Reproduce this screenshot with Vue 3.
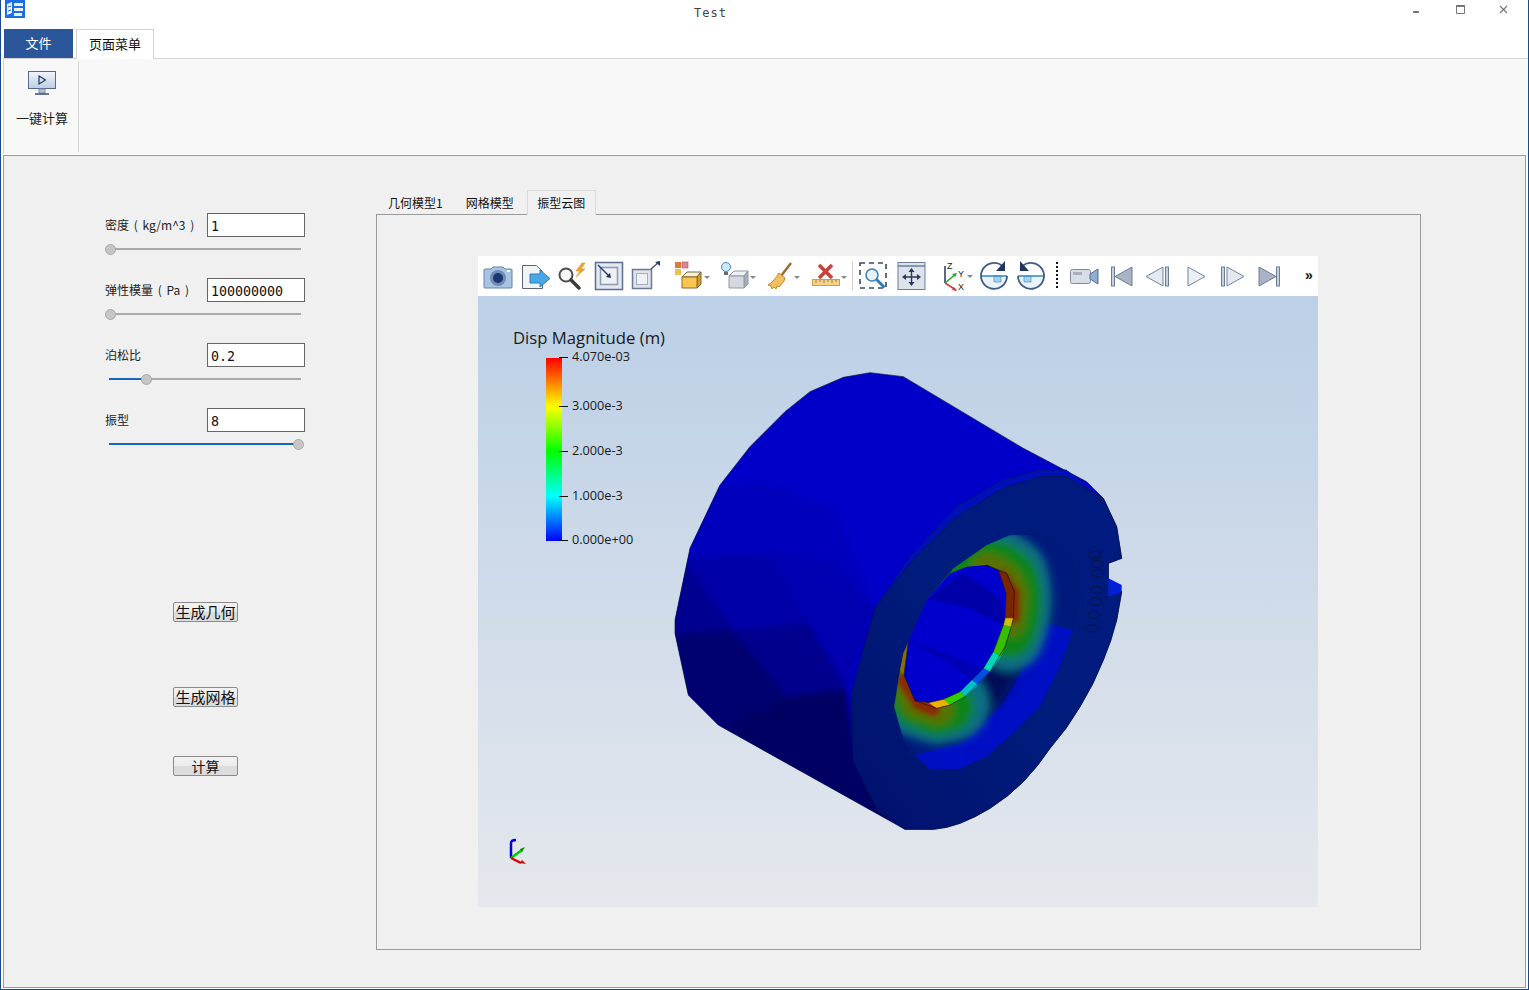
<template>
  <div class="window">
    <header class="title-bar">
      <svg class="app-icon" width="20" height="18" viewBox="0 0 20 18">
        <rect width="20" height="18" fill="#1b6fe3" />
        <path d="M2 4l5-2v11l-5 2zM9 3h9v3H9zM9 8h9v3H9zM9 13h8v3H9z" fill="#e8f1fc" />
        <path d="M3 7l3-1M3 11l3-1" stroke="#1b6fe3" />
      </svg>
      <span class="title-text">Test</span>
      <div class="win-controls">
        <svg width="42" height="24" viewBox="0 0 42 24"><rect x="16" y="11" width="6" height="2" fill="#777" /></svg>
        <svg width="42" height="24" viewBox="0 0 42 24"><path d="M17.500 5.500h8v8h-8z" fill="none" stroke="#777" /><path d="M17 6h9" stroke="#777" stroke-width="2" /></svg>
        <svg width="42" height="24" viewBox="0 0 42 24"><path d="M19 6l7 7M26 6l-7 7" stroke="#777" stroke-width="1.200" /></svg>
      </div>
    </header>

    <nav class="ribbon-tabs">
      <div class="file-tab">文件</div>
      <div class="page-tab">页面菜单</div>
    </nav>

    <section class="ribbon">
      <div class="ribbon-group">
        <svg width="28" height="24" viewBox="0 0 28 24">
          <defs>
            <linearGradient id="screen" x1="0" y1="0" x2="0" y2="1">
              <stop offset="0" stop-color="#f2f6fb" />
              <stop offset="1" stop-color="#bccde4" />
            </linearGradient>
          </defs>
          <rect x="0.500" y="0.500" width="27" height="17" fill="url(#screen)" stroke="#56698c" />
          <path d="M11 5l6.500 4-6.500 4z" fill="none" stroke="#24365e" stroke-width="1.200" />
          <path d="M11 18h6v4h-6z" fill="#b9c3d4" stroke="#7a8aa6" />
          <path d="M7 23h14" stroke="#3a4a6e" stroke-width="1.500" />
        </svg>
        <span class="ribbon-label">一键计算</span>
      </div>
    </section>

    <main class="central">
      <aside class="side-panel">
        <div class="form">
          <div v-for="field in fields" :key="field.label" class="field">
            <div class="field-row">
              <label class="field-label">{{ field.label }}</label>
              <input class="field-input" type="text" :value="field.value" readonly />
            </div>
            <div class="slider">
              <div class="slider-fill" :style="{ width: field.pos + 'px' }"></div>
              <div class="slider-thumb" :style="{ left: field.pos + 'px' }"></div>
            </div>
          </div>
        </div>
        <div class="actions">
          <button class="action-btn geom">生成几何</button>
          <button class="action-btn mesh">生成网格</button>
          <button class="action-btn calc">计算</button>
        </div>
      </aside>

      <section class="tab-widget">
        <div class="tab-bar">
          <div v-for="tab in tabs" :key="tab" class="tab" :class="{ active: tab === '振型云图' }">{{ tab }}</div>
        </div>
        <div class="tab-pane">
          <div class="viewer">
            <div class="toolbar">
              <!-- camera -->
              <svg width="38" height="32" viewBox="0 0 38 32">
                <path d="M3 9h6l2-2h10l2 2h6a1 1 0 0 1 1 1v17a1 1 0 0 1-1 1H3a1 1 0 0 1-1-1V10a1 1 0 0 1 1-1z" fill="#a9c4e2" stroke="#6584ab" />
                <circle cx="16" cy="18" r="8" fill="#6d8db5" />
                <circle cx="16" cy="18" r="5" fill="#1b3672" />
                <path d="M25 11h3" stroke="#fff" stroke-width="2" />
              </svg>
              <!-- export -->
              <svg width="36" height="32" viewBox="0 0 36 32">
                <path d="M2.500 5.500h14l6 6v17h-20z" fill="#f1f3f6" stroke="#5b6675" />
                <path d="M10 14h10v-4l10 8.500-10 8.500v-4H10z" fill="#4aa6e4" stroke="#2a80c4" />
              </svg>
              <!-- zoom to data -->
              <svg width="37" height="32" viewBox="0 0 37 32">
                <circle cx="10" cy="15" r="6.500" fill="#f3f5f7" stroke="#4d4d4d" stroke-width="2" />
                <path d="M15 20l8 8" stroke="#3c3c3c" stroke-width="3.500" stroke-linecap="round" />
                <path d="M26 3l-6 8h4l-4 6 9-8h-4l4-6z" fill="#f0a42c" stroke="#d68a18" stroke-width="0.500" />
              </svg>
              <!-- reset -->
              <svg width="37" height="32" viewBox="0 0 37 32">
                <rect x="2.500" y="2.500" width="27" height="27" fill="#e3e7ee" stroke="#5a6f92" stroke-width="1.500" />
                <rect x="7.500" y="7.500" width="17" height="17" fill="#eef0f4" stroke="#8d9bb2" stroke-width="1.500" />
                <path d="M5 5l11 11" stroke="#2a3f68" stroke-width="1.400" />
                <path d="M18 18l-5-1 4-4z" fill="#1a2f5c" />
              </svg>
              <!-- zoom closest -->
              <svg width="44" height="32" viewBox="0 0 44 32">
                <rect x="2.500" y="9.500" width="19" height="19" fill="#dfe3ea" stroke="#6c7a91" stroke-width="1.500" />
                <rect x="6.500" y="13.500" width="11" height="11" fill="#eff1f4" stroke="#a2adbe" />
                <path d="M21 9l8-7" stroke="#3f4e6c" stroke-width="1.400" />
                <path d="M30 1v5l-5-4z" fill="#2b3f66" />
              </svg>
              <!-- select cells -->
              <svg width="47" height="32" viewBox="0 0 47 32">
                <rect x="1" y="2" width="6" height="6" fill="#e07a3a" />
                <rect x="8" y="2" width="6" height="6" fill="#d88a9a" stroke="#b33" stroke-width="0.500" />
                <rect x="1" y="9" width="6" height="6" fill="#f0c04c" />
                <path d="M8 17l5-5h14l-4 5z" fill="#f5efdc" stroke="#7a6a40" />
                <path d="M23 17l4-5v12l-4 4z" fill="#d89a2a" stroke="#7a6a40" />
                <path d="M8 17h15v11H8z" fill="#fbc552" stroke="#8a6a20" />
                <path d="M30 16h6l-3 3z" fill="#888" />
              </svg>
              <!-- light cube -->
              <svg width="44" height="32" viewBox="0 0 44 32">
                <circle cx="5" cy="7" r="4.500" fill="#cfe8fa" stroke="#3e88c6" />
                <path d="M3 12h4v3H3z" fill="#667" />
                <path d="M8 16l5-5h14l-4 5z" fill="#eef0f3" stroke="#8f98a6" />
                <path d="M23 16l4-5v13l-4 4z" fill="#a7aeb9" stroke="#8f98a6" />
                <path d="M8 16h15v12H8z" fill="#d5d9df" stroke="#8f98a6" />
                <path d="M29 16h6l-3 3z" fill="#888" />
              </svg>
              <!-- broom -->
              <svg width="45" height="32" viewBox="0 0 45 32">
                <path d="M26 3L16 16" stroke="#9a6a30" stroke-width="2.400" />
                <path d="M14 13l6 5-1 3-5 6-2-1-1 3-2-2-2 2-1-3-3-1c4-2 8-7 11-12z" fill="#f2c060" stroke="#c98a28" />
                <path d="M29 16h6l-3 3z" fill="#888" />
              </svg>
              <!-- delete ruler -->
              <svg width="47" height="32" viewBox="0 0 47 32">
                <path d="M9 5l13 13M22 5L9 18" stroke="#c9403a" stroke-width="3.600" />
                <rect x="2.500" y="19.500" width="27" height="6" fill="#f4d48a" stroke="#d89a40" />
                <path d="M6 20v3M10 20v2M14 20v3M18 20v2M22 20v3M26 20v2" stroke="#a87828" />
                <path d="M31 16h6l-3 3z" fill="#888" />
                <path d="M42.500 2v28" stroke="#d0d0d0" />
              </svg>
              <!-- zoom to box -->
              <svg width="38" height="32" viewBox="0 0 38 32">
                <rect x="3" y="3" width="26" height="25" fill="none" stroke="#3a4a6e" stroke-width="1.600" stroke-dasharray="5 4" />
                <circle cx="15" cy="15" r="6" fill="#e6f1fa" stroke="#3d7fb8" stroke-width="1.600" />
                <path d="M19.500 19.500l8 8" stroke="#2f7cbc" stroke-width="3" />
              </svg>
              <!-- pan -->
              <svg width="44" height="32" viewBox="0 0 44 32">
                <rect x="3" y="2.500" width="27" height="27" fill="#dde2eb" stroke="#6c7d99" />
                <path d="M3 6h27" stroke="#6c7d99" stroke-width="1.500" />
                <path d="M16.500 11v12M10 17h13" stroke="#27395e" stroke-width="1.400" />
                <path d="M16.500 8l-3 4h6zM16.500 26l-3-4h6zM7 17l4-3v6zM26 17l-4-3v6z" fill="#27395e" />
              </svg>
              <!-- axes -->
              <svg width="39" height="32" viewBox="0 0 39 32">
                <path d="M6 23V6" stroke="#24365e" stroke-width="1.500" />
                <path d="M6 23l11-9" stroke="#2ca02c" stroke-width="1.500" />
                <path d="M6 23l11 7" stroke="#d8393a" stroke-width="1.500" />
                <path d="M18 13l-5 1 3 3z" fill="#2ca02c" />
                <path d="M18 31l-5-1 2-3z" fill="#d8393a" />
                <text x="8" y="9" class="axis-letter">Z</text>
                <text x="19" y="17" class="axis-letter">Y</text>
                <text x="19" y="30" class="axis-letter">X</text>
                <path d="M28 15h6l-3 3z" fill="#888" />
              </svg>
              <!-- rotate cw -->
              <svg width="37" height="32" viewBox="0 0 37 32">
                <path d="M3 16a13 13 0 0 0 26 0z" fill="#eaf4fb" />
                <path d="M16 16h7v6h-7z" fill="#a8d4f0" stroke="#4d8cc0" stroke-width="0.700" />
                <path d="M3 16h26" stroke="#2f86c8" stroke-width="1.500" />
                <path d="M25 6.500A13 13 0 1 0 29 16" fill="none" stroke="#3f5c82" stroke-width="1.800" />
                <path d="M27 1v10H18z" fill="#1f3660" />
              </svg>
              <!-- rotate ccw -->
              <svg width="53" height="32" viewBox="0 0 53 32">
                <g transform="translate(32 0) scale(-1 1)">
                  <path d="M3 16a13 13 0 0 0 26 0z" fill="#eaf4fb" />
                  <path d="M16 16h7v6h-7z" fill="#a8d4f0" stroke="#4d8cc0" stroke-width="0.700" />
                  <path d="M3 16h26" stroke="#2f86c8" stroke-width="1.500" />
                  <path d="M25 6.500A13 13 0 1 0 29 16" fill="none" stroke="#3f5c82" stroke-width="1.800" />
                  <path d="M27 1v10H18z" fill="#1f3660" />
                </g>
                <path d="M42 2v28" stroke="#111" stroke-width="2" stroke-dasharray="2 2" />
              </svg>
              <!-- video -->
              <svg width="37" height="32" viewBox="0 0 37 32">
                <rect x="2.500" y="9.500" width="20" height="14" rx="2" fill="#d8dee8" stroke="#7d8aa2" />
                <rect x="5" y="12" width="9" height="3" fill="#a8b0bd" />
                <path d="M22 14l8-5v15l-8-5z" fill="#8faed2" stroke="#556b90" />
              </svg>
              <!-- first -->
              <svg width="37" height="32" viewBox="0 0 37 32">
                <rect x="6.500" y="7" width="3" height="19" fill="#c8d0de" stroke="#6b7c9a" />
                <path d="M10 16.500L27 7v19z" fill="#a9b3c4" stroke="#6b7c9a" />
              </svg>
              <!-- prev -->
              <svg width="38" height="32" viewBox="0 0 38 32">
                <path d="M4 16.500L21 7v19z" fill="#e4e8ef" stroke="#7083a3" />
                <rect x="23.500" y="7" width="3" height="19" fill="#c8d0de" stroke="#6b7c9a" />
              </svg>
              <!-- play -->
              <svg width="36" height="32" viewBox="0 0 36 32">
                <path d="M8 7l17 9.500L8 26z" fill="#eceff4" stroke="#7083a3" />
              </svg>
              <!-- next -->
              <svg width="37" height="32" viewBox="0 0 37 32">
                <rect x="5.500" y="7" width="3" height="19" fill="#c8d0de" stroke="#6b7c9a" />
                <path d="M11 7l17 9.500L11 26z" fill="#e4e8ef" stroke="#7083a3" />
              </svg>
              <!-- last -->
              <svg width="39" height="32" viewBox="0 0 39 32">
                <path d="M6 7l17 9.500L6 26z" fill="#a9b3c4" stroke="#6b7c9a" />
                <rect x="23.500" y="7" width="3" height="19" fill="#c8d0de" stroke="#6b7c9a" />
              </svg>
              <span class="more">»</span>
            </div>

            <div class="canvas">
              <div class="legend">
                <div class="legend-title">Disp Magnitude (m)</div>
                <div class="color-bar">
                  <div v-for="tick in ticks" :key="tick.text" class="tick" :style="{ top: tick.top + 'px' }">
                    <i class="tick-mark"></i><span class="tick-text">{{ tick.text }}</span>
                  </div>
                </div>
              </div>

              <!-- model, coordinates are 3x screen pixels -->
              <svg class="model" width="460" height="480" viewBox="0 0 1380 1440">
                <defs>
                  <clipPath id="body-clip">
                    <polygon :points="outline" />
                  </clipPath>
                  <clipPath id="cavity-clip">
                    <polygon :points="cavity" />
                  </clipPath>
                  <filter id="shade" filterUnits="userSpaceOnUse" x="0" y="0" width="1380" height="1440">
                    <feGaussianBlur stdDeviation="9" />
                  </filter>
                  <filter id="soft" filterUnits="userSpaceOnUse" x="0" y="0" width="1380" height="1440">
                    <feGaussianBlur stdDeviation="13" />
                  </filter>
                  <filter id="soft-small" filterUnits="userSpaceOnUse" x="0" y="0" width="1380" height="1440">
                    <feGaussianBlur stdDeviation="7" />
                  </filter>
                  <linearGradient id="face" x1="0" y1="1" x2="1" y2="0">
                    <stop offset="0" stop-color="#00106c" />
                    <stop offset="0.500" stop-color="#001c7c" />
                    <stop offset="1" stop-color="#001a80" />
                  </linearGradient>
                </defs>

                <polygon :points="outline" fill="#0000c8" />
                <g clip-path="url(#body-clip)">
                  <g filter="url(#shade)">
                    <polygon points="150,375 300,370 495,450 615,750 545,1000 415,790 290,580 55,595 60,565 0,600" fill="#0002bc" />
                    <polygon points="40,595 290,580 415,790 190,810" fill="#0004a8" />
                    <polygon points="290,580 495,610 615,750 530,985 415,790" fill="#0006b0" />
                    <polygon points="0,780 40,595 190,810 0,820" fill="#000490" />
                    <polygon points="190,810 415,790 530,985 350,1010" fill="#00028c" />
                    <polygon points="0,820 190,810 350,1010 145,1110 40,1005" fill="#000070" />
                    <polygon points="145,1110 350,1010 530,985 560,1205 640,1355 720,1440" fill="#000064" />
                  </g>
                </g>
                <polygon :points="outline" fill="none" stroke="#0a1440" stroke-width="2" />

                <polygon points="615,745 720,590 860,440 1000,360 1110,330 1190,330 1300,415 1190,352 1110,350 860,470 720,610" fill="#0010b8" />
                <polyline points="615,745 720,590 860,440 1000,360 1110,330 1190,330" fill="none" stroke="#081858" stroke-width="2" />

                <polygon :points="front" fill="url(#face)" stroke="#081440" stroke-width="2" />

                <polygon :points="cavity" fill="#001a7c" />
                <g clip-path="url(#cavity-clip)">
                  <polygon points="1130,790 1000,1030 870,1150 735,1185 780,1228 870,1228 950,1190 1030,1120 1110,1040 1170,920 1210,810" fill="#000ec4" />
                  <g filter="url(#soft)" fill="none" stroke-linecap="round" stroke-linejoin="round">
                    <path d="M1010 860L950 970L880 1050" stroke="#000e58" stroke-width="130" />
                    <path d="M830 660Q950 560 1030 640Q1060 730 1020 830" stroke="#0a6e84" stroke-width="205" />
                    <path d="M880 635Q970 590 1025 655Q1050 735 1015 815" stroke="#0a8414" stroke-width="160" />
                    <path d="M950 625Q1010 640 1030 700L1020 785" stroke="#5c7000" stroke-width="88" />
                    <path d="M712 890L700 945L735 1022L800 1045L850 1035" stroke="#0a6e84" stroke-width="215" />
                    <path d="M708 910L705 950L740 1025L800 1050L835 1040" stroke="#0a8414" stroke-width="155" />
                    <path d="M702 935L740 1030L805 1050" stroke="#5c7000" stroke-width="88" />
                  </g>
                  <g filter="url(#soft-small)" fill="none" stroke-linecap="round">
                    <path d="M995 650L1030 700V770" stroke="#8a2a00" stroke-width="36" />
                    <path d="M700 960L745 1030L790 1050" stroke="#8a2a00" stroke-width="36" />
                  </g>
                </g>
                <polygon :points="cavity" fill="none" stroke="#081858" stroke-width="1.500" stroke-opacity="0.500" />

                <polygon points="950,615 985,630 1008,700 1005,775 1000,795 970,875 940,925 905,960 870,995 820,1018 775,1028 735,1022 702,945 715,845 770,720 840,640 890,620" fill="#0000cc" />
                <polygon points="770,720 880,640 985,710 1005,775 1000,795 900,745 790,720" fill="#0000a8" />
                <polygon points="715,845 780,860 950,930 905,960 820,900" fill="#0000b6" />

                <polygon points="985,630 1010,640 1033,695 1030,775 1005,775 1008,700" fill="#7a2600" />
                <polygon points="1005,775 1030,775 1024,800 1000,795" fill="#d4bc00" />
                <polygon points="1000,795 1024,800 1005,860 992,890 970,875" fill="#38c000" />
                <polygon points="970,875 992,890 960,935 940,925" fill="#00d8b8" />
                <polygon points="940,925 960,935 925,975 905,960" fill="#0050e0" />
                <polygon points="905,960 925,975 885,1010 870,995" fill="#00c0c8" />
                <polygon points="870,995 885,1010 840,1035 820,1018" fill="#30d000" />
                <polygon points="820,1018 840,1035 800,1045 775,1028" fill="#f0b000" />
                <polygon points="775,1028 800,1045 735,1022" fill="#a83000" />
                <polygon points="715,845 700,880 690,930 702,945" fill="#8a7000" />
                <polyline points="950,615 985,630 1008,700 1005,775 1000,795 970,875 940,925 905,960 870,995 820,1018 775,1028 735,1022 702,945 715,845" fill="none" stroke="#0a1030" stroke-width="2" />
                <polyline points="985,630 1010,640 1033,695 1030,775 1024,800 1005,860 960,935 885,1010 840,1035 800,1045 735,1022" fill="none" stroke="#0a1030" stroke-width="2" />

                <polygon points="1315,655 1355,675 1355,695 1315,710" fill="#0020d8" />
                <!-- engraved mark on the rim -->
                <g fill="none" stroke="#0a1440" stroke-width="3">
                  <ellipse v-for="mark in marks" :key="mark.y" :cx="mark.x" :cy="mark.y" rx="18" ry="11" />
                </g>
              </svg>

              <svg class="mini-axes" width="24" height="28" viewBox="0 0 24 28">
                <path d="M5 21V6Q5 3 10 3" fill="none" stroke="#0000d8" stroke-width="2.500" />
                <path d="M5 21L16 13" stroke="#00c800" stroke-width="2.500" />
                <path d="M5 21L15 26" stroke="#e00000" stroke-width="2.500" />
                <path d="M19 10l-5 2 2 3z" fill="#0a8a0a" />
                <path d="M20 27l-6-1 2-3z" fill="#d80000" />
              </svg>
            </div>
          </div>
        </div>
      </section>
    </main>
  </div>
</template>

<script setup>
const fields = [
  { label: '密度 ( kg/m^3 )', value: '1', pos: 1.5 },
  { label: '弹性模量 ( Pa )', value: '100000000', pos: 1.5 },
  { label: '泊松比', value: '0.2', pos: 37.5 },
  { label: '振型', value: '8', pos: 189 },
]

const tabs = ['几何模型1', '网格模型', '振型云图']

const ticks = [
  { text: '4.070e-03', top: -1 },
  { text: '3.000e-3', top: 48 },
  { text: '2.000e-3', top: 93 },
  { text: '1.000e-3', top: 138 },
  { text: '0.000e+00', top: 182 },
]

const outline = '600,38 520,52 420,95 345,155 240,260 150,375 60,565 15,780 15,820 55,1005 145,1095 705,1408 790,1408 830,1402 870,1390 915,1370 960,1345 1012,1308 1060,1265 1102,1217 1140,1165 1188,1105 1230,1040 1268,972 1300,900 1322,842 1340,780 1355,695 1315,710 1315,610 1355,595 1340,500 1300,415 1250,365 1060,265 700,50'
const front = '615,745 720,610 860,470 1000,385 1110,350 1190,350 1300,415 1340,500 1355,595 1315,610 1315,710 1355,695 1340,780 1322,842 1300,900 1268,972 1230,1040 1188,1105 1140,1165 1102,1217 1060,1265 1012,1308 960,1345 915,1370 870,1390 830,1402 790,1408 705,1408 625,1355 550,1205 545,1000'
const cavity = '1020,525 1100,523 1160,545 1210,610 1225,700 1210,810 1170,920 1110,1040 1030,1120 950,1190 870,1228 780,1228 720,1180 700,1140 672,1040 690,930 720,840 770,720 850,625 950,555'

const marks = [
  { x: 1275, y: 585 },
  { x: 1282, y: 612 },
  { x: 1284, y: 640 },
  { x: 1280, y: 690 },
  { x: 1276, y: 725 },
  { x: 1272, y: 765 },
  { x: 1266, y: 805 },
]
</script>

<style>
html,
body {
  margin: 0;
  overflow: hidden;
}
</style>

<style scoped>
.window {
  width: 1529px;
  height: 990px;
  box-sizing: border-box;
  background: #fff;
  border-left: 1px solid #1c4a86;
  border-right: 1px solid #1c4a86;
  border-bottom: 1px solid #1c4a86;
  display: flex;
  flex-direction: column;
  font-family: "Noto Sans CJK SC", "Liberation Sans", sans-serif;
  color: #111;
  overflow: hidden;
}

.title-bar {
  height: 29px;
  flex: none;
  display: flex;
  position: relative;
}

.app-icon {
  margin-left: 4px;
}

.title-text {
  position: absolute;
  left: 693px;
  top: 5px;
  font: 12px/16px "DejaVu Sans Mono", monospace;
  letter-spacing: 1px;
  color: #444;
}

.win-controls {
  margin-left: auto;
  margin-right: 5px;
  display: flex;
  align-items: flex-start;
}

.ribbon-tabs {
  height: 29px;
  flex: none;
  display: flex;
  align-items: flex-end;
  padding-left: 3px;
  gap: 3px;
  font-size: 13px;
}

.file-tab {
  width: 69px;
  height: 29px;
  background: #2b579a;
  color: #fff;
  text-align: center;
  line-height: 27px;
}

.page-tab {
  width: 76px;
  height: 29px;
  background: #fff;
  border: 1px solid #d4d4d4;
  border-bottom: 0;
  text-align: center;
  line-height: 27px;
  margin-bottom: -1px;
  position: relative;
}

.ribbon {
  height: 96px;
  flex: none;
  box-sizing: border-box;
  margin-left: 2px;
  background: #f8f8f8;
  border-top: 1px solid #d4d4d4;
  border-left: 1px solid #d4d4d4;
  padding: 2px 0 2px 0;
  display: flex;
}

.ribbon-group {
  width: 75px;
  border-right: 1px solid #d4d4d4;
  display: flex;
  flex-direction: column;
  align-items: center;
  padding: 10px 0 0 2px;
  gap: 13px;
  box-sizing: border-box;
}

.ribbon-label {
  font-size: 13px;
  line-height: 20px;
  color: #222;
}

.central {
  flex: 1;
  margin: 1px 2px 1px 2px;
  border: 1px solid #9a9a9a;
  background: #f0f0f0;
  display: flex;
  min-height: 0;
}

.side-panel {
  width: 372px;
  flex: none;
  box-sizing: border-box;
  padding: 57px 0 0 101px;
}

.form {
  width: 200px;
  display: flex;
  flex-direction: column;
  gap: 15px;
}

.field {
  height: 50px;
}

.field-row {
  display: flex;
  align-items: flex-start;
  height: 24px;
}

.field-label {
  width: 102px;
  flex: none;
  font-size: 12px;
  line-height: 23px;
  word-spacing: 2px;
  color: #222;
  white-space: nowrap;
}

.field-input {
  width: 98px;
  height: 24px;
  box-sizing: border-box;
  border: 1px solid #666;
  background: #fff;
  padding: 2px 3px 0;
  font: 13.300px "DejaVu Sans Mono", monospace;
  color: #111;
  outline: none;
}

.slider {
  position: relative;
  margin: 11px 0 0 4px;
  width: 192px;
  height: 2px;
  background: #aaa;
}

.slider-fill {
  position: absolute;
  left: 0;
  top: 0;
  height: 2px;
  background: #1668b4;
}

.slider-thumb {
  position: absolute;
  top: -4.500px;
  width: 11px;
  height: 11px;
  margin-left: -5.500px;
  box-sizing: border-box;
  border-radius: 50%;
  background: #c6c6c6;
  border: 1px solid #a8a8a8;
}

.actions {
  margin: 0 0 0 68px;
  width: 65px;
  display: flex;
  flex-direction: column;
}

.action-btn {
  width: 65px;
  height: 20px;
  box-sizing: border-box;
  padding: 0;
  border: 1px solid #8a8a8a;
  border-radius: 2px;
  background: linear-gradient(180deg, #f2f2f2 0%, #ececec 48%, #dcdcdc 52%, #dcdcdc 100%);
  font-family: "Noto Sans CJK SC", sans-serif;
  font-size: 15px;
  line-height: 16px;
  color: #111;
}

.action-btn.geom {
  margin-top: 144px;
}

.action-btn.mesh {
  margin-top: 65px;
}

.action-btn.calc {
  margin-top: 49px;
  font-size: 14px;
}

.tab-widget {
  width: 1045px;
  flex: none;
  margin-top: 33px;
  display: flex;
  flex-direction: column;
}

.tab-bar {
  height: 25px;
  flex: none;
  display: flex;
  padding-left: 2px;
  gap: 3px;
  align-items: flex-end;
}

.tab {
  padding: 0 10px;
  height: 23px;
  font-size: 12px;
  line-height: 23px;
  color: #111;
  white-space: nowrap;
}

.tab.active {
  height: 25px;
  box-sizing: border-box;
  background: #f0f0f0;
  border: 1px solid #dadada;
  border-bottom: 0;
  padding: 0 9.500px;
  margin-bottom: -1px;
  position: relative;
}

.tab-pane {
  height: 736px;
  flex: none;
  box-sizing: border-box;
  border: 1px solid #9a9a9a;
  padding: 41px 0 0 101px;
}

.viewer {
  width: 840px;
  height: 651px;
  display: flex;
  flex-direction: column;
}

.toolbar {
  height: 40px;
  flex: none;
  background: #fff;
  display: flex;
  align-items: center;
  padding-left: 4px;
}

.toolbar svg {
  flex: none;
  overflow: visible;
}

.axis-letter {
  font: 9px "Liberation Sans", sans-serif;
  fill: #222;
}

.more {
  width: 32px;
  text-align: center;
  font: bold 14px "Liberation Sans", sans-serif;
  color: #111;
  padding: 0 0 2px 8px;
  box-sizing: border-box;
}

.canvas {
  flex: 1;
  position: relative;
  background: linear-gradient(180deg, #bbcfe6 0%, #e5e8ed 100%);
  overflow: hidden;
}

.legend {
  position: absolute;
  left: 35px;
  top: 31px;
  font-family: "Open Sans", sans-serif;
  color: #1a1a1a;
}

.legend-title {
  font-size: 16.700px;
  line-height: 22px;
  white-space: nowrap;
}

.color-bar {
  position: relative;
  margin: 9px 0 0 33px;
  width: 16px;
  height: 183px;
  background: linear-gradient(180deg, #ff0000 0%, #ffff00 26.500%, #00ff00 51%, #00ffff 75.500%, #0000ff 100%);
}

.tick {
  position: absolute;
  left: 13px;
  display: flex;
  align-items: center;
  height: 0;
  font-size: 12.700px;
  white-space: nowrap;
}

.tick-mark {
  width: 9px;
  height: 1px;
  margin-right: 4px;
  background: #111;
}

.tick-text {
  margin-bottom: 3px;
}

.model {
  position: absolute;
  left: 192px;
  top: 64px;
}

.mini-axes {
  position: absolute;
  left: 28px;
  top: 541px;
}
</style>
